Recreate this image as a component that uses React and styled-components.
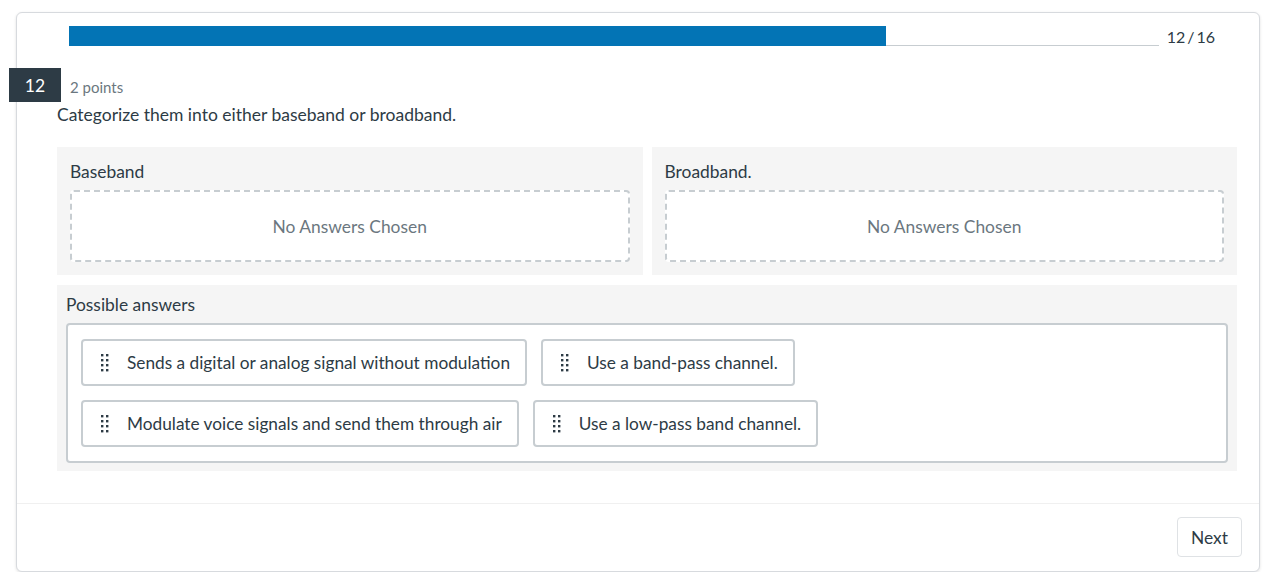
import React from "react";
import styled, { createGlobalStyle } from "styled-components";

const GlobalStyle = createGlobalStyle`
  html, body {
    margin: 0;
    padding: 0;
    background: #ffffff;
    font-family: Lato, "Liberation Sans", sans-serif;
    color: #2d3b45;
  }
`;

const Page = styled.div`
  padding: 12px 20px 0 16px;
`;

const Card = styled.div`
  width: 1244px;
  box-sizing: border-box;
  border: 1px solid #d7dade;
  border-radius: 6px;
  box-shadow: 0 1px 3px rgba(0, 0, 0, 0.12);
  background: #fff;
`;

const ProgressRow = styled.div`
  display: flex;
  align-items: center;
  margin: 13px 44px 0 52px;
  height: 20px;
`;

const Track = styled.div`
  flex: 1;
  height: 20px;
  box-sizing: border-box;
  border-bottom: 1px solid #c7cdd1;
`;

const Fill = styled.div`
  height: 20px;
  background: #0374b5;
`;

const Count = styled.span`
  margin-left: 8px;
  margin-top: 1px;
  font-size: 16px;
  color: #2d3b45;
`;

const QuestionHeader = styled.div`
  display: flex;
  align-items: center;
  margin: 22px 0 0 -8px;
  height: 34px;
`;

const Badge = styled.div`
  width: 52px;
  height: 34px;
  background: #2d3b45;
  color: #fff;
  font-size: 17.5px;
  display: flex;
  align-items: center;
  justify-content: center;
`;

const Points = styled.span`
  margin-left: 9px;
  font-size: 15px;
  color: #6b7780;
  margin-top: 3px;
`;

const Body = styled.div`
  padding: 0 22px 0 40px;
`;

const QuestionText = styled.p`
  margin: 1px 0 20px;
  font-size: 17.5px;
  line-height: 24px;
`;

const CategoryRow = styled.div`
  display: grid;
  grid-template-columns: 1fr 1fr;
  gap: 9px;
`;

const Panel = styled.div`
  background: #f5f5f5;
  padding: ${(p) => p.$pad};
`;

const PanelTitle = styled.div`
  font-size: 17.4px;
  line-height: 22px;
  margin-bottom: ${(p) => p.$gap}px;
`;

const DropZone = styled.div`
  height: 72px;
  box-sizing: border-box;
  border: 2px dashed #c7cdd1;
  border-radius: 4px;
  background: #fff;
  display: flex;
  align-items: center;
  justify-content: center;
  font-size: 17.4px;
  color: #6b7780;
`;

const AnswersPanel = styled(Panel)`
  margin-top: 10px;
`;

const AnswerBox = styled.div`
  border: 2px solid #c7cdd1;
  border-radius: 4px;
  background: #fff;
  padding: 14px 13px;
  display: flex;
  flex-direction: column;
  gap: 14px;
`;

const AnswerRow = styled.div`
  display: flex;
  gap: 14px;
`;

const Chip = styled.div`
  display: flex;
  align-items: center;
  height: 47px;
  box-sizing: border-box;
  border: 2px solid #c7cdd1;
  border-radius: 4px;
  background: #fff;
  padding: 0 15px 0 18px;
  font-size: 17.25px;
  white-space: nowrap;
`;

const Handle = styled.svg`
  flex: none;
  margin-right: 18px;
`;

const Footer = styled.div`
  margin-top: 32px;
  border-top: 1px solid #f0f0f0;
  padding: 13px 17px 14px;
  display: flex;
  justify-content: flex-end;
`;

const NextButton = styled.button`
  height: 40px;
  padding: 0 13px;
  border: 1px solid #dfe2e5;
  border-radius: 4px;
  background: #fff;
  font-family: inherit;
  font-size: 17.4px;
  color: #2d3b45;
`;

const DragHandle = () => (
  <Handle width="8" height="18" viewBox="0 0 8 18">
    {[0, 5, 10, 15].map((y) =>
      [0, 5].map((x) => (
        <rect key={`${x}-${y}`} x={x} y={y} width="2.4" height="2.4" fill="#2d3b45" />
      ))
    )}
  </Handle>
);

const categories = ["Baseband", "Broadband."];

const answers = [
  ["Sends a digital or analog signal without modulation", "Use a band-pass channel."],
  ["Modulate voice signals and send them through air", "Use a low-pass band channel."],
];

export default function App() {
  return (
    <Page>
      <GlobalStyle />
      <Card>
        <ProgressRow>
          <Track>
            <Fill style={{ width: `${(12 / 16) * 100}%` }} />
          </Track>
          <Count>12{"\u2009"}/{"\u2009"}16</Count>
        </ProgressRow>
        <QuestionHeader>
          <Badge>12</Badge>
          <Points>2 points</Points>
        </QuestionHeader>
        <Body>
          <QuestionText>Categorize them into either baseband or broadband.</QuestionText>
          <CategoryRow>
            {categories.map((c) => (
              <Panel key={c} $pad="14px 13px 13px">
                <PanelTitle $gap={7}>{c}</PanelTitle>
                <DropZone>No Answers Chosen</DropZone>
              </Panel>
            ))}
          </CategoryRow>
          <AnswersPanel $pad="9px 9px 8px">
            <PanelTitle $gap={7}>Possible answers</PanelTitle>
            <AnswerBox>
              {answers.map((row, i) => (
                <AnswerRow key={i}>
                  {row.map((a) => (
                    <Chip key={a}>
                      <DragHandle />
                      {a}
                    </Chip>
                  ))}
                </AnswerRow>
              ))}
            </AnswerBox>
          </AnswersPanel>
        </Body>
        <Footer>
          <NextButton>Next</NextButton>
        </Footer>
      </Card>
    </Page>
  );
}
